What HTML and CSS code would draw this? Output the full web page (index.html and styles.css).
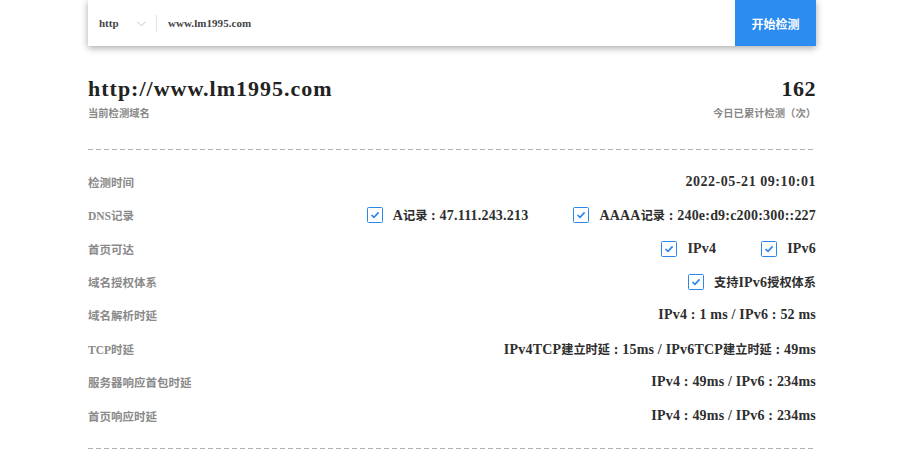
FILE: index.html
```html
<!DOCTYPE html>
<html lang="zh-CN">
<head>
<meta charset="utf-8">
<title>检测</title>
<link rel="stylesheet" href="styles.css">
</head>
<body>
<div class="wrap">
  <div class="search">
    <div class="proto">
      <span>http</span>
      <svg class="chev" width="9" height="6" viewBox="0 0 9 6"><polyline points="0.5,0.8 4.5,4.8 8.5,0.8" fill="none" stroke="#c4c4c4" stroke-width="1"/></svg>
    </div>
    <div class="divider"></div>
    <div class="domain">www.lm1995.com</div>
    <button class="go">开始检测</button>
  </div>

  <div class="head">
    <div class="head-l">
      <div class="big">http://www.lm1995.com</div>
      <div class="sub">当前检测域名</div>
    </div>
    <div class="head-r">
      <div class="big">162</div>
      <div class="sub">今日已累计检测（次）</div>
    </div>
  </div>

  <div class="dash"></div>

  <div class="rows">
    <div class="row"><div class="lab">检测时间</div><div class="val"><span class="date">2022-05-21 09:10:01</span></div></div>
    <div class="row"><div class="lab">DNS记录</div>
      <div class="val">
        <span class="item"><span class="cb"><svg width="10" height="8" viewBox="0 0 10 8"><polyline points="1.5,4 4,6.4 8.6,1.4" fill="none" stroke="#2b86ee" stroke-width="1.7"/></svg></span><span>A<span class="zh">记录</span> : 47.111.243.213</span></span>
        <span class="item"><span class="cb"><svg width="10" height="8" viewBox="0 0 10 8"><polyline points="1.5,4 4,6.4 8.6,1.4" fill="none" stroke="#2b86ee" stroke-width="1.7"/></svg></span><span>AAAA<span class="zh">记录</span> : 240e:d9:c200:300::227</span></span>
      </div>
    </div>
    <div class="row"><div class="lab">首页可达</div>
      <div class="val">
        <span class="item"><span class="cb"><svg width="10" height="8" viewBox="0 0 10 8"><polyline points="1.5,4 4,6.4 8.6,1.4" fill="none" stroke="#2b86ee" stroke-width="1.7"/></svg></span><span>IPv4</span></span>
        <span class="item"><span class="cb"><svg width="10" height="8" viewBox="0 0 10 8"><polyline points="1.5,4 4,6.4 8.6,1.4" fill="none" stroke="#2b86ee" stroke-width="1.7"/></svg></span><span>IPv6</span></span>
      </div>
    </div>
    <div class="row"><div class="lab">域名授权体系</div>
      <div class="val">
        <span class="item"><span class="cb"><svg width="10" height="8" viewBox="0 0 10 8"><polyline points="1.5,4 4,6.4 8.6,1.4" fill="none" stroke="#2b86ee" stroke-width="1.7"/></svg></span><span><span class="zh">支持</span>IPv6<span class="zh">授权体系</span></span></span>
      </div>
    </div>
    <div class="row"><div class="lab">域名解析时延</div><div class="val"><span>IPv4 : 1 ms / IPv6 : 52 ms</span></div></div>
    <div class="row"><div class="lab">TCP时延</div><div class="val"><span>IPv4TCP<span class="zh">建立时延</span> : 15ms / IPv6TCP<span class="zh">建立时延</span> : 49ms</span></div></div>
    <div class="row"><div class="lab">服务器响应首包时延</div><div class="val"><span>IPv4 : 49ms / IPv6 : 234ms</span></div></div>
    <div class="row"><div class="lab">首页响应时延</div><div class="val"><span>IPv4 : 49ms / IPv6 : 234ms</span></div></div>
  </div>

  <div class="dash"></div>
</div>
</body>
</html>
```

FILE: styles.css
```css
html, body {
  margin: 0;
  padding: 0;
  background: #fff;
}
body {
  font-family: "Liberation Serif", "Noto Sans CJK SC", serif;
  font-weight: bold;
  color: #333;
  overflow: hidden;
}
.wrap {
  width: 728px;
  margin-left: 88px;
}
.search {
  height: 46px;
  display: flex;
  align-items: center;
  background: #fff;
  box-shadow: 0 2px 7px rgba(0, 0, 0, 0.35);
}
.proto {
  display: flex;
  align-items: center;
  padding-left: 11px;
  font-size: 11px;
  color: #444;
  width: 57px;
}
.proto span { width: 38px; }
.chev { display: block; margin-top: 1px; }
.divider {
  width: 1px;
  height: 17px;
  background: #e2e2e2;
}
.domain {
  flex: 1;
  padding-left: 11px;
  font-size: 11px;
  letter-spacing: 0.05px;
  color: #444;
}
.go {
  width: 81px;
  height: 46px;
  border: 0;
  margin: 0;
  padding: 0;
  background: #2d8cf0;
  color: #fff;
  font-family: "Noto Sans CJK SC", sans-serif;
  font-weight: bold;
  font-size: 12px;
}
.head {
  display: flex;
  justify-content: space-between;
  padding-top: 28px;
  height: 75px;
}
.head-r { text-align: right; }
.big {
  font-size: 22px;
  letter-spacing: 1px;
  line-height: 30px;
  color: #222;
}
.head-r .big { letter-spacing: 0.5px; }
.sub {
  font-family: "Noto Sans CJK SC", sans-serif;
  font-size: 10.3px;
  color: #888;
  line-height: 16px;
  margin-top: 1px;
}
.dash {
  height: 1px;
  background: repeating-linear-gradient(to right, #b0b0b0 0 5px, transparent 5px 8px);
}
.rows { padding: 15px 0; }
.row {
  height: 33.45px;
  display: flex;
  align-items: center;
  justify-content: space-between;
}
.lab {
  font-size: 11.5px;
  color: #8a8a8a;
}
.val {
  display: flex;
  align-items: center;
  gap: 45px;
  font-size: 14px;
  letter-spacing: 0.2px;
  color: #2e2e2e;
}
.date { letter-spacing: 0.55px; }
.zh {
  font-family: "Noto Sans CJK SC", sans-serif;
  font-size: 12.2px;
  letter-spacing: 0;
}
.item {
  display: flex;
  align-items: center;
}
.cb {
  box-sizing: border-box;
  width: 16px;
  height: 16px;
  border: 1.5px solid #2b86ee;
  border-radius: 1.5px;
  display: flex;
  align-items: center;
  justify-content: center;
  margin-right: 10px;
}
.cb svg { display: block; }
```
